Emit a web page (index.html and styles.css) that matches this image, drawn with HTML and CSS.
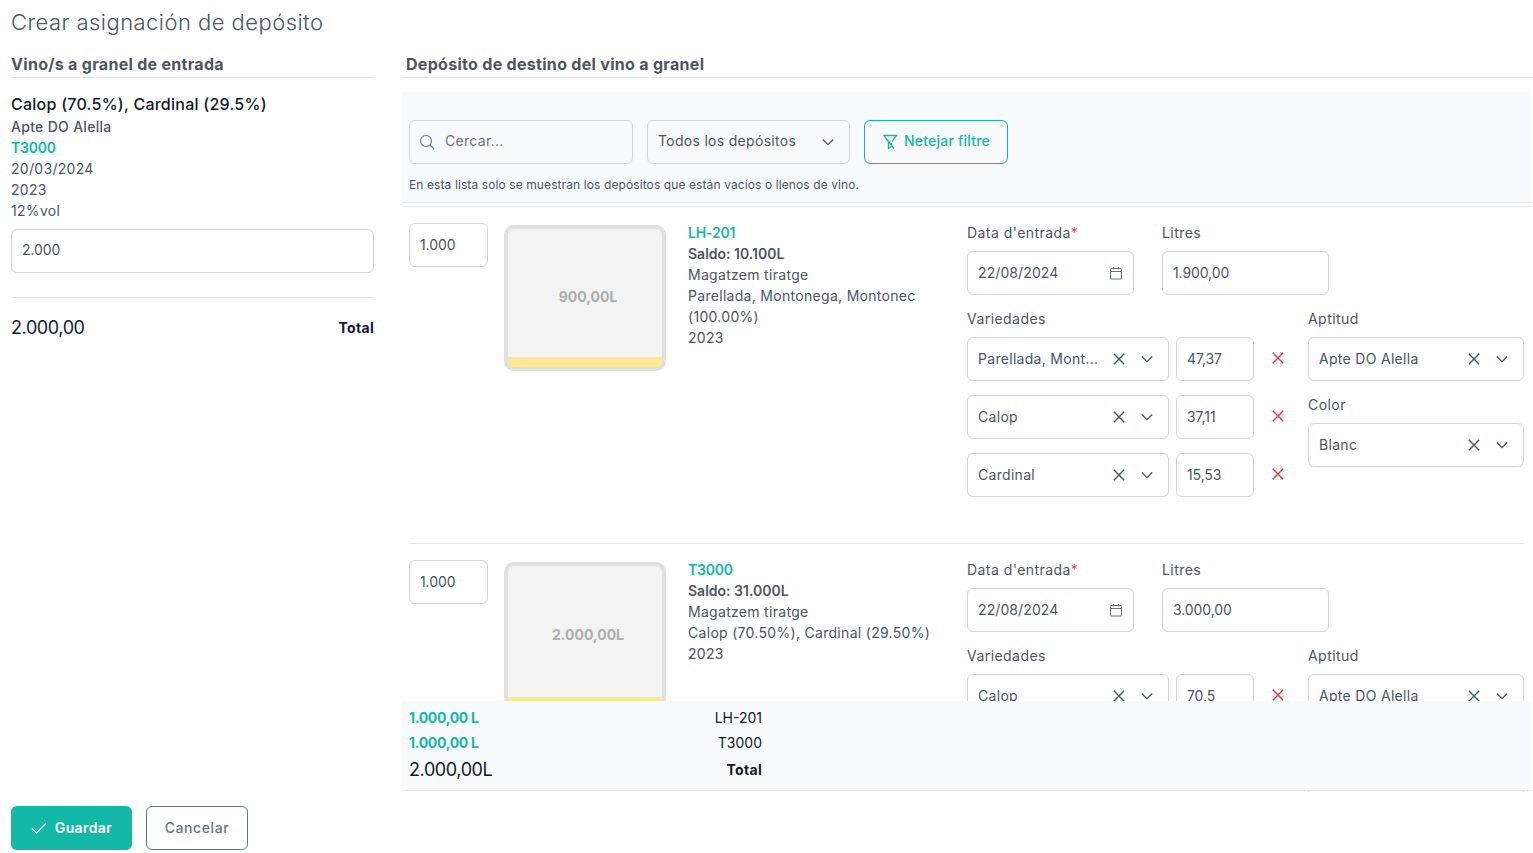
FILE: index.html
```html
<!DOCTYPE html>
<html lang="es">
<head>
	<meta charset="UTF-8">
	<title>Crear asignación de depósito</title>
	<link rel="stylesheet" href="styles.css">
</head>
<body>
	<svg class="defs" aria-hidden="true">
		<symbol id="i-chevron" viewBox="0 0 12 12"><path d="M.8 3.500 6 8.700 11.200 3.500" fill="none" stroke="currentColor" stroke-width="1.300"/></symbol>
		<symbol id="i-x" viewBox="0 0 12 12"><path d="M.8.8 11.200 11.200M11.200.8.8 11.200" fill="none" stroke="currentColor" stroke-width="1.400"/></symbol>
		<symbol id="i-cal" viewBox="0 0 14 14"><path d="M2.500 2.500h9a1 1 0 0 1 1 1v8.500a1 1 0 0 1-1 1h-9a1 1 0 0 1-1-1V3.500a1 1 0 0 1 1-1zM1.500 5.500h11M4.500 1v2.500M9.500 1v2.500" fill="none" stroke="currentColor"/></symbol>
	</svg>

	<div class="page">
		<h1 class="title">Crear asignación de depósito</h1>
		<div class="main">
			<section class="left">
				<h2 class="heading">Vino/s a granel de entrada</h2>
				<div class="wine-name">Calop (70.5%), Cardinal (29.5%)</div>
				<div class="line medium">Apte DO Alella</div>
				<div class="line link">T3000</div>
				<div class="line">20/03/2024</div>
				<div class="line">2023</div>
				<div class="line">12%vol</div>
				<input class="input input-full" type="text" value="2.000">
				<div class="left-total">
					<span class="big">2.000,00</span>
					<b>Total</b>
				</div>
			</section>

			<section class="right">
				<h2 class="heading heading-right">Depósito de destino del vino a granel</h2>
				<div class="filters">
					<div class="filter-row">
						<div class="box search">
							<svg width="16" height="16" viewBox="0 0 16 16"><circle cx="7" cy="7" r="5.500" fill="none" stroke="currentColor" stroke-width="1.100"/><path d="M11 11l4 4" stroke="currentColor" stroke-width="1.100"/></svg>
							<span class="placeholder">Cercar...</span>
						</div>
						<div class="box filter-select">
							<span class="grow">Todos los depósitos</span>
							<svg class="ico"><use href="#i-chevron"/></svg>
						</div>
						<button class="btn-clean" type="button">
							<svg width="16" height="16" viewBox="0 0 16 16" fill="none" stroke="currentColor" stroke-width="1.300"><path d="M1.500 1.500h13L10 7.500M4 4.500 6.500 8v6.500l3-2V9M1.500 1 12 14.500"/></svg>
							Netejar filtre
						</button>
					</div>
					<p class="note">En esta lista solo se muestran los depósitos que están vacíos o llenos de vino.</p>
				</div>

				<div class="list">
					<div class="row">
						<input class="input qty" type="text" value="1.000">
						<div class="tank">
							<div class="tank-label">900,00L</div>
							<div class="tank-fill" style="height: 10px"></div>
						</div>
						<div class="info">
							<div class="line link">LH-201</div>
							<div class="line strong">Saldo: 10.100L</div>
							<div class="line">Magatzem tiratge</div>
							<div class="line">Parellada, Montonega, Montonec (100.00%)</div>
							<div class="line">2023</div>
						</div>
						<div class="form">
							<div class="form-top">
								<div class="field">
									<label class="label">Data d'entrada<span class="req">*</span></label>
									<div class="box date"><span class="grow">22/08/2024</span><svg class="ico-cal"><use href="#i-cal"/></svg></div>
								</div>
								<div class="field">
									<label class="label">Litres</label>
									<input class="input litres" type="text" value="1.900,00">
								</div>
							</div>
							<div class="form-bottom">
								<div class="vars">
									<label class="label">Variedades</label>
									<div class="var-row">
										<div class="box sel var-sel"><span class="grow">Parellada, Mont...</span><svg class="ico"><use href="#i-x"/></svg><svg class="ico"><use href="#i-chevron"/></svg></div>
										<input class="input pct" type="text" value="47,37">
										<svg class="remove"><use href="#i-x"/></svg>
									</div>
									<div class="var-row">
										<div class="box sel var-sel"><span class="grow">Calop</span><svg class="ico"><use href="#i-x"/></svg><svg class="ico"><use href="#i-chevron"/></svg></div>
										<input class="input pct" type="text" value="37,11">
										<svg class="remove"><use href="#i-x"/></svg>
									</div>
									<div class="var-row">
										<div class="box sel var-sel"><span class="grow">Cardinal</span><svg class="ico"><use href="#i-x"/></svg><svg class="ico"><use href="#i-chevron"/></svg></div>
										<input class="input pct" type="text" value="15,53">
										<svg class="remove"><use href="#i-x"/></svg>
									</div>
								</div>
								<div class="side">
									<label class="label">Aptitud</label>
									<div class="box sel"><span class="grow">Apte DO Alella</span><svg class="ico"><use href="#i-x"/></svg><svg class="ico"><use href="#i-chevron"/></svg></div>
									<label class="label">Color</label>
									<div class="box sel"><span class="grow">Blanc</span><svg class="ico"><use href="#i-x"/></svg><svg class="ico"><use href="#i-chevron"/></svg></div>
								</div>
							</div>
						</div>
					</div>

					<div class="row">
						<input class="input qty" type="text" value="1.000">
						<div class="tank">
							<div class="tank-label">2.000,00L</div>
							<div class="tank-fill" style="height: 7px"></div>
						</div>
						<div class="info">
							<div class="line link">T3000</div>
							<div class="line strong">Saldo: 31.000L</div>
							<div class="line">Magatzem tiratge</div>
							<div class="line">Calop (70.50%), Cardinal (29.50%)</div>
							<div class="line">2023</div>
						</div>
						<div class="form">
							<div class="form-top">
								<div class="field">
									<label class="label">Data d'entrada<span class="req">*</span></label>
									<div class="box date"><span class="grow">22/08/2024</span><svg class="ico-cal"><use href="#i-cal"/></svg></div>
								</div>
								<div class="field">
									<label class="label">Litres</label>
									<input class="input litres" type="text" value="3.000,00">
								</div>
							</div>
							<div class="form-bottom">
								<div class="vars">
									<label class="label">Variedades</label>
									<div class="var-row">
										<div class="box sel var-sel"><span class="grow">Calop</span><svg class="ico"><use href="#i-x"/></svg><svg class="ico"><use href="#i-chevron"/></svg></div>
										<input class="input pct" type="text" value="70,5">
										<svg class="remove"><use href="#i-x"/></svg>
									</div>
								</div>
								<div class="side">
									<label class="label">Aptitud</label>
									<div class="box sel"><span class="grow">Apte DO Alella</span><svg class="ico"><use href="#i-x"/></svg><svg class="ico"><use href="#i-chevron"/></svg></div>
									<label class="label">Color</label>
									<div class="box sel"><span class="grow">Blanc</span><svg class="ico"><use href="#i-x"/></svg><svg class="ico"><use href="#i-chevron"/></svg></div>
								</div>
							</div>
						</div>
					</div>
				</div>

				<div class="summary">
					<div class="sum-row"><span class="sum-qty">1.000,00 L</span><span>LH-201</span></div>
					<div class="sum-row"><span class="sum-qty">1.000,00 L</span><span>T3000</span></div>
					<div class="sum-row sum-total"><span class="big">2.000,00L</span><b>Total</b></div>
				</div>
			</section>
		</div>

		<div class="actions">
			<button class="btn btn-save" type="button">
				<svg width="16" height="12" viewBox="0 0 16 12"><path d="M1 6.500 5.500 11 15 1" fill="none" stroke="currentColor" stroke-width="1.300"/></svg>
				Guardar
			</button>
			<button class="btn btn-cancel" type="button">Cancelar</button>
		</div>
	</div>
</body>
</html>
```

FILE: styles.css
```css
*{
	font-family: Inter, "Noto Sans", "Liberation Sans", sans-serif;
	margin: 0;
	padding: 0;
	box-sizing: border-box;
}
html, body{
	height: 100%;
	overflow: hidden;
}
body{
	background-color: #fff;
	color: #4b5563;
	font-size: 14px;
	letter-spacing: 0.3px;
}
.defs{
	display: none;
}
.page{
	height: 853px;
	padding: 6px 0 3px 11px;
	display: flex;
	flex-direction: column;
}
.title{
	font-size: 22px;
	font-weight: 300;
	line-height: 32px;
	letter-spacing: 0.46px;
}
.main{
	flex: 1;
	min-height: 0;
	margin-top: 14px;
	display: flex;
	gap: 28px;
}
.left{
	width: 363px;
	flex: none;
}
.right{
	width: 1129px;
	flex: none;
	position: relative;
	display: flex;
	flex-direction: column;
	min-height: 0;
}
.heading{
	font-size: 16px;
	font-weight: 700;
	line-height: 24px;
	height: 26px;
	border-bottom: 1px solid #e5e7eb;
	letter-spacing: 0.3px;
}
.heading-right{
	padding-left: 4px;
	margin-right: -2px;
}
.wine-name{
	margin-top: 14px;
	font-size: 16px;
	font-weight: 500;
	line-height: 24px;
	color: #111827;
	letter-spacing: 0.25px;
}
.line{
	line-height: 21px;
}
.medium{
	font-weight: 500;
}
.strong{
	font-weight: 600;
	letter-spacing: 0;
}
.link{
	color: #14b8a6;
	font-weight: 600;
	letter-spacing: -0.2px;
}
.input, .box{
	height: 44px;
	border: 1px solid #d1d5db;
	border-radius: 6px;
	background: #fff;
	color: #4b5563;
	font-size: 14px;
	padding: 0 10px 2px;
}
.input{
	outline: none;
	letter-spacing: -0.1px;
}
.box{
	display: flex;
	align-items: center;
}
.grow{
	flex: 1;
	min-width: 0;
	white-space: nowrap;
}
.input-full{
	width: 100%;
	margin-top: 8px;
	padding-bottom: 4px;
}
.left-total{
	margin-top: 24px;
	border-top: 1px solid #e5e7eb;
	padding-top: 18px;
	display: flex;
	justify-content: space-between;
	align-items: center;
	line-height: 24px;
}
.big{
	font-size: 18px;
	color: #111827;
	letter-spacing: -0.4px;
}
.left-total b, .sum-total b{
	font-weight: 700;
	color: #111827;
	letter-spacing: 0.3px;
}
.filters{
	height: 111px;
	flex: none;
	margin-top: 14px;
	background-color: #f9fafb;
	border-bottom: 1px solid #e5e7eb;
	padding: 28px 7px 0;
}
.filter-row{
	display: flex;
	gap: 14px;
}
.filters .box{
	background: #f9fafb;
	padding-bottom: 3px;
}
.search{
	width: 224px;
	padding-left: 9px;
	gap: 10px;
}
.search svg{
	color: #6b7280;
	flex: none;
	margin-top: 3px;
}
.placeholder{
	color: #6b7280;
}
.filter-select{
	width: 203px;
	padding-right: 15px;
}
.ico{
	width: 12px;
	height: 12px;
	flex: none;
	margin-top: 2px;
	color: #4b5563;
}
.btn-clean{
	width: 144px;
	height: 44px;
	border: 1px solid #14b8a6;
	border-radius: 6px;
	background: #f9fafb;
	color: #14b8a6;
	font-size: 14px;
	font-weight: 500;
	letter-spacing: 0.2px;
	padding-bottom: 3px;
	display: flex;
	align-items: center;
	justify-content: center;
	gap: 6px;
}
.btn-clean svg{
	margin-top: 3px;
}
.note{
	margin-top: 12px;
	font-size: 12px;
	line-height: 18px;
	letter-spacing: 0.1px;
}
.list{
	flex: 1;
	min-height: 0;
	overflow: hidden;
	margin-top: 3px;
	border-top: 1px solid #e5e7eb;
	padding: 0 7px;
}
.row{
	display: flex;
	align-items: flex-start;
	padding: 16px 0 46px;
	border-bottom: 1px solid #e5e7eb;
}
.qty{
	width: 79px;
	flex: none;
}
.tank{
	width: 162px;
	height: 146px;
	flex: none;
	margin: 2px 0 0 16px;
	border: 4px solid #e0e0e0;
	border-radius: 10px;
	background: #f3f3f3;
	overflow: hidden;
	display: flex;
	flex-direction: column;
}
.tank-label{
	flex: 1;
	padding: 6px 0 0 6px;
	display: flex;
	align-items: center;
	justify-content: center;
	font-weight: 700;
	color: #adadad;
	letter-spacing: 0;
}
.tank-fill{
	background: #fde992;
}
.info{
	width: 257px;
	flex: none;
	margin: -1px 0 0 22px;
	padding-right: 12px;
}
.form{
	margin-left: 22px;
	display: flex;
	flex-direction: column;
	gap: 14px;
}
.form-top{
	display: flex;
	gap: 28px;
}
.field{
	width: 167px;
}
.label{
	display: block;
	line-height: 21px;
	margin: -1px 0 8px;
	letter-spacing: 0.45px;
}
.req{
	color: #ef4444;
}
.litres{
	width: 100%;
}
.ico-cal{
	width: 14px;
	height: 14px;
	color: #6b7280;
	flex: none;
	margin-top: 2px;
}
.date{
	padding-right: 10px;
	letter-spacing: 0.1px;
}
.form-bottom{
	display: flex;
	gap: 16px;
}
.vars{
	width: 325px;
}
.var-row{
	display: flex;
	align-items: center;
	gap: 7px;
	margin-bottom: 14px;
}
.var-row:last-child{
	margin-bottom: 0;
}
.var-sel{
	width: 202px;
	flex: none;
}
.sel{
	gap: 16px;
	padding-right: 15px;
}
.pct{
	width: 78px;
	flex: none;
}
.remove{
	width: 12px;
	height: 12px;
	flex: none;
	margin: -2px 0 0 11px;
	color: #ef3340;
}
.side{
	width: 216px;
}
.side .box{
	margin-bottom: 14px;
}
.side .box:last-child{
	margin-bottom: 0;
}
.summary{
	position: absolute;
	left: 0;
	right: 0;
	bottom: 1px;
	height: 90px;
	background-color: #f9fafb;
	border-bottom: 1px solid #e5e7eb;
	padding: 4px 0 0 7px;
}
.sum-row{
	width: 353px;
	display: flex;
	justify-content: space-between;
	align-items: center;
	height: 25px;
	color: #111827;
	letter-spacing: 0;
}
.sum-total{
	height: 28px;
}
.sum-qty{
	color: #14b8a6;
	font-weight: 700;
	letter-spacing: -0.3px;
}
.actions{
	margin-top: 14px;
	display: flex;
	gap: 14px;
}
.btn{
	height: 44px;
	border-radius: 6px;
	font-size: 14px;
	font-weight: 600;
	letter-spacing: 0.4px;
	padding-bottom: 2px;
	display: flex;
	align-items: center;
	justify-content: center;
}
.btn svg{
	margin-top: 2px;
}
.btn-save{
	width: 121px;
	gap: 8px;
	border: none;
	background-color: #14b8a6;
	color: #fff;
}
.btn-cancel{
	width: 102px;
	border: 1px solid #64748b;
	background: #fff;
	color: #64748b;
	font-weight: 500;
	letter-spacing: 0.6px;
}
```
